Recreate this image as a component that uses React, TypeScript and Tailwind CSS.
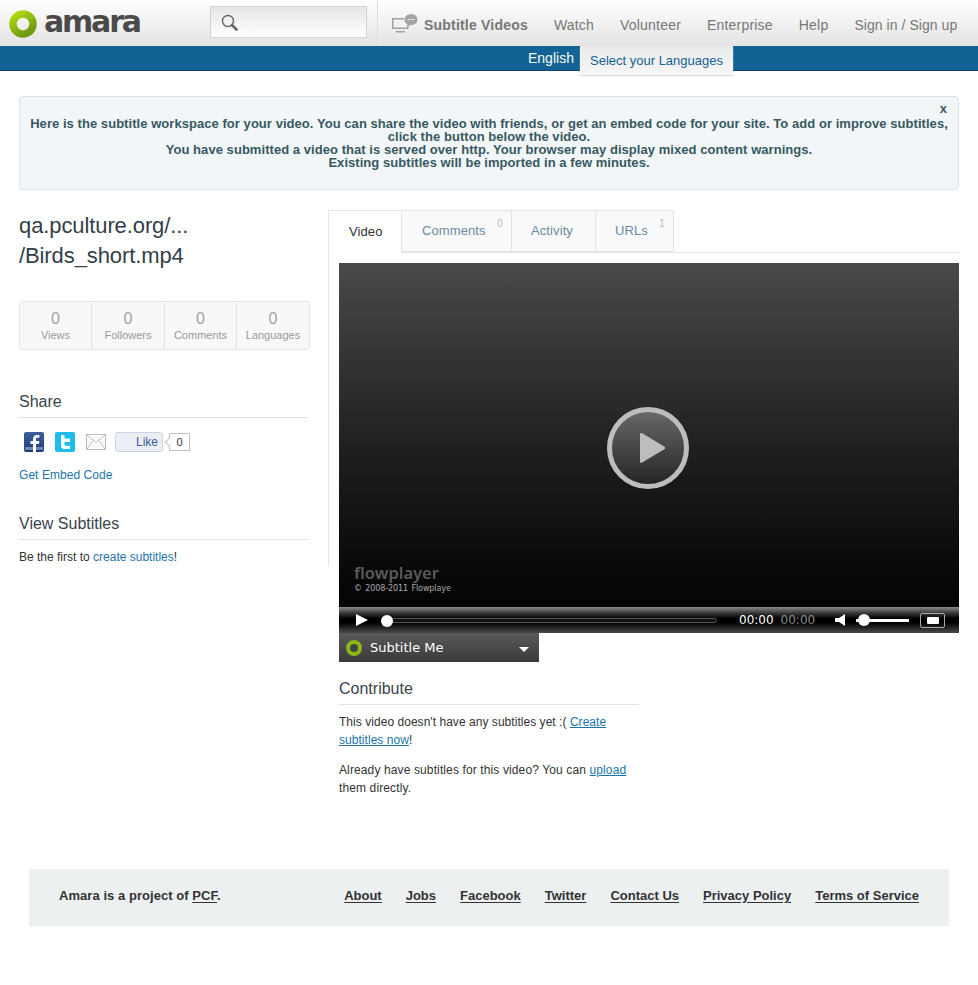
const sans = "font-['Liberation_Sans',Arial,sans-serif]"

function Logo() {
  return (
    <div className="flex items-center">
      <svg width="28" height="28" viewBox="0 0 28 28">
        <defs>
          <linearGradient id="ring" x1="0" y1="0" x2="0.6" y2="1">
            <stop offset="0" stopColor="#b2dc0c" />
            <stop offset="1" stopColor="#6f9a12" />
          </linearGradient>
        </defs>
        <circle cx="14" cy="14" r="10" fill="none" stroke="url(#ring)" strokeWidth="7.5" />
      </svg>
      <span className="ml-[7px] font-['DejaVu_Sans',sans-serif] text-[30px] font-bold leading-none tracking-[-2.2px] text-[#4a4a4a] -translate-y-[2px]">
        amara
      </span>
    </div>
  )
}

function Header() {
  return (
    <header className="flex h-[46px] bg-gradient-to-b from-white to-[#e3e3e3] pl-[9px]">
      <div className="w-[201px] pt-[9px]">
        <Logo />
      </div>
      <div className="mt-[6px] flex h-[32px] w-[157px] items-center border border-[#d4d4d4] bg-gradient-to-b from-[#e6e6e6] to-white pl-[10px]">
        <svg width="17" height="17" viewBox="0 0 17 17">
          <circle cx="7" cy="7" r="5.500" fill="none" stroke="#666" strokeWidth="1.400" />
          <path d="M11 11l4.500 4.500" stroke="#666" strokeWidth="2.600" strokeLinecap="round" />
        </svg>
      </div>
      <div className="ml-[10px] h-[44px] w-px bg-[#dcdcdc]" />
      <nav className="flex items-center pl-[13px] pt-[4px] text-[14px] tracking-[0.2px] text-[#777]">
        <svg width="27" height="20" viewBox="0 0 27 20" className="mr-[6px] -translate-y-[1px]">
          <path d="M1 4h12v1.500H2.500v8H16V11h1.500v4H1zM5 17h9v1.500H5z" fill="#a3a3a3" />
          <ellipse cx="20" cy="5.500" rx="6.500" ry="5.500" fill="#a3a3a3" />
          <path d="M16 9l1 4 3-3z" fill="#a3a3a3" />
          <circle cx="17.500" cy="5.500" r="0.800" fill="#fff" />
          <circle cx="20" cy="5.500" r="0.800" fill="#fff" />
          <circle cx="22.500" cy="5.500" r="0.800" fill="#fff" />
        </svg>
        <a className="mr-[26px] font-bold">Subtitle Videos</a>
        <a className="mr-[26px]">Watch</a>
        <a className="mr-[26px]">Volunteer</a>
        <a className="mr-[26px]">Enterprise</a>
        <a className="mr-[26px]">Help</a>
        <a className="tracking-[0.05px]">Sign in / Sign up</a>
      </nav>
    </header>
  )
}

function LanguageBar() {
  return (
    <div className="relative flex h-[25px] items-start border-b border-[#0c4365] bg-[#136296] pl-[528px]">
      <span className="pt-[3px] text-[14px] leading-[18px] text-[#f6fbe9]">English</span>
      <a className="absolute left-[580px] top-0 h-[29px] w-[153px] bg-gradient-to-b from-[#e9e9e9] to-[#f7f7f7] pl-[10px] pt-[6px] text-[13px] leading-[18px] text-[#136296] shadow-[0_1px_1px_#ddd]">
        Select your Languages
      </a>
    </div>
  )
}

function Notice() {
  return (
    <div className="mx-[19px] mt-[25px] h-[94px] rounded-[4px] border border-[#dde3e8] bg-[#f2f6f9] px-[5px] pt-[5px] text-center text-[13px] font-bold leading-[13px] tracking-[0.05px] text-[#37595f]">
      <div className="mb-[2px] pr-[6px] text-right leading-[13px]">x</div>
      <p>
        Here is the subtitle workspace for your video. You can share the video with friends, or get an embed code for your site. To add or improve subtitles, click the button below the video.
      </p>
      <p>You have submitted a video that is served over http. Your browser may display mixed content warnings.</p>
      <p>Existing subtitles will be imported in a few minutes.</p>
    </div>
  )
}

function Stat({ label, width, last }: { label: string; width: string; last?: boolean }) {
  return (
    <div className={`pt-[7px] text-center ${width} ${last ? 'flex-1' : 'border-r border-[#e4e4e4]'}`}>
      <div className="text-[16px] leading-[20px] text-[#a3a3a3]">0</div>
      <div className="-mt-[2px] text-[11px] leading-[16px] text-[#999]">{label}</div>
    </div>
  )
}

function Heading({ children }: { children: string }) {
  return <h3 className="border-b border-[#dfe3e7] pb-[5px] text-[16px] leading-[20px] text-[#3a444b]">{children}</h3>
}

function ShareIcons() {
  return (
    <div className="mt-[14px] flex items-center pl-[5px]">
      <svg width="20" height="20" viewBox="0 0 20 20">
        <defs>
          <linearGradient id="fb" x1="0" y1="0" x2="0" y2="1">
            <stop offset="0" stopColor="#3f5f9f" />
            <stop offset="1" stopColor="#1d3a78" />
          </linearGradient>
        </defs>
        <rect width="20" height="20" rx="2" fill="url(#fb)" />
        <rect x="1" y="15" width="18" height="3" fill="#6f86b5" />
        <path d="M12 20v-8h3l.4-3H12V7.200c0-.9.3-1.400 1.500-1.400h1.900V3.100c-.4 0-1.400-.1-2.500-.1C10.600 3 9 4.400 9 6.900V9H6.500v3H9v8z" fill="#fff" />
      </svg>
      <svg width="20" height="20" viewBox="0 0 20 20" className="ml-[11px]">
        <rect width="20" height="20" rx="2" fill="#1ebcec" />
        <path d="M6 3h3.500v3.500H15V10H9.500v2.200c0 1 .5 1.500 1.500 1.500h4V17h-5.500C7.300 17 6 15.600 6 13.500z" fill="#fff" />
      </svg>
      <svg width="20" height="16" viewBox="0 0 20 16" className="ml-[11px]">
        <rect x="0.500" y="0.500" width="19" height="15" fill="#fafafa" stroke="#bdbdbd" />
        <path d="M0.500 0.500l9.500 8 9.500-8M0.500 15.500l6.500-9M19.500 15.500l-6.500-9" fill="none" stroke="#bdbdbd" />
      </svg>
      <div className="ml-[9px] flex h-[20px] w-[48px] items-center justify-end rounded-[3px] border border-[#cad4e7] bg-[#eceef5] pr-[4px] text-[12px] text-[#3b5998]">
        Like
      </div>
      <div className="relative ml-[6px] flex h-[18px] w-[21px] items-center justify-center border border-[#c1c1c1] bg-white text-[11px] text-[#333]">
        <span className="absolute -left-[4px] top-[5px] size-[6px] rotate-45 border-b border-l border-[#c1c1c1] bg-white" />
        0
      </div>
    </div>
  )
}

function Sidebar() {
  return (
    <aside className="w-[309px] shrink-0">
      <h2 className="pt-[1px] text-[22px] leading-[30px] tracking-[-0.1px] text-[#333f48]">
        qa.pculture.org/...
        <br />
        /Birds_short.mp4
      </h2>
      <div className="mt-[30px] flex h-[49px] w-[291px] rounded-[4px] border border-[#e4e4e4] bg-[#f8f8f8]">
        <Stat label="Views" width="w-[72px]" />
        <Stat label="Followers" width="w-[73px]" />
        <Stat label="Comments" width="w-[72px]" />
        <Stat label="Languages" width="w-[72px]" last />
      </div>
      <div className="mt-[42px] w-[289px]">
        <Heading>Share</Heading>
        <ShareIcons />
        <a className="mt-[14px] block text-[12px] leading-[18px] tracking-[0.05px] text-[#1b75a8]">Get Embed Code</a>
      </div>
      <div className="mt-[30px] w-[289px]">
        <Heading>View Subtitles</Heading>
        <p className="mt-[8px] text-[12px] leading-[18px] text-[#333]">
          Be the first to <a className="text-[#1b75a8]">create subtitles</a>!
        </p>
      </div>
    </aside>
  )
}

function Tab({ label, count, width, inset, active }: { label: string; count?: number; width: string; inset: string; active?: boolean }) {
  return (
    <div
      className={`relative flex items-center border-r border-t border-[#e1e5e8] text-[13px] tracking-[0.1px] ${width} ${inset} ${
        active ? '-mb-px h-[43px] bg-white text-[#333]' : 'h-[42px] border-b bg-[#f9f9f9] text-[#6a8ba3]'
      }`}
    >
      {label}
      {count !== undefined && <span className="absolute right-[8px] top-[5px] text-[10px] text-[#b5bcc2]">{count}</span>}
    </div>
  )
}

function Player() {
  return (
    <div className="mt-[10px]">
      <div className="relative h-[344px] w-[620px] overflow-hidden bg-gradient-to-b from-[#4a4a4a] via-[#1f1f1f] via-55% to-[#040404]">
        <svg width="82" height="82" viewBox="0 0 82 82" className="absolute left-[268px] top-[144px]">
          <defs>
            <linearGradient id="disc" x1="0" y1="0" x2="0" y2="1">
              <stop offset="0" stopColor="#6a6a6a" />
              <stop offset="1" stopColor="#232323" />
            </linearGradient>
          </defs>
          <circle cx="41" cy="41" r="38.500" fill="url(#disc)" stroke="#bdbdbd" strokeWidth="5" />
          <path d="M33 27.500c0-1.500 1-2 2.200-1.300l22 13.300c1.200.8 1.200 2 0 2.800l-22 13.300c-1.200.7-2.200.2-2.200-1.300z" fill="#bdbdbd" />
        </svg>
        <div className="absolute left-[15px] top-[299px] whitespace-nowrap">
          <div className="font-['Noto_Sans',sans-serif] text-[16.5px] font-semibold leading-[21px] text-[#5a5a5a]">flowplayer</div>
          <div className="font-['DejaVu_Sans',sans-serif] text-[8px] leading-[11px] tracking-[-0.1px] text-[#aaa] [word-spacing:1px]">© 2008-2011 Flowplaye</div>
        </div>
      </div>
      <div className="flex h-[26px] w-[620px] items-center bg-[linear-gradient(#8a8a8a,#333_25%,#000_45%,#000_60%,#4a4a4a)] font-['DejaVu_Sans',sans-serif]">
        <svg width="12" height="12" viewBox="0 0 12 12" className="ml-[17px]">
          <path d="M0 0l12 6-12 6z" fill="#fff" />
        </svg>
        <div className="relative ml-[13px] h-[5px] w-[336px] rounded-full border border-[#555] bg-[#111]">
          <span className="absolute -left-[1px] -top-[4px] size-[12px] rounded-full bg-white" />
        </div>
        <span className="ml-[22px] text-[12px] text-white">00:00</span>
        <span className="ml-[7px] text-[12px] text-[#8a8a8a]">00:00</span>
        <svg width="11" height="12" viewBox="0 0 11 12" className="ml-[20px]">
          <path d="M0 4h4l6-4v12l-6-4H0z" fill="#fff" />
        </svg>
        <div className="relative ml-[10px] h-[3px] w-[53px] bg-white">
          <span className="absolute left-[2px] -top-[5px] size-[12px] rounded-full bg-white" />
        </div>
        <div className="ml-[11px] flex h-[15px] w-[25px] items-center justify-center rounded-[2px] border border-[#aaa]">
          <span className="h-[7px] w-[12px] rounded-[1px] bg-white" />
        </div>
      </div>
      <div className="flex h-[29px] w-[200px] items-center bg-gradient-to-b from-[#5a5a5a] to-[#3a3a3a] pl-[7px] pr-[10px] font-['DejaVu_Sans',sans-serif] text-[13px] text-white">
        <span className="size-[16px] rounded-full border-[4px] border-[#8fb516] bg-[#444]" />
        <span className="ml-[8px]">Subtitle Me</span>
        <span className="ml-auto mt-[3px] border-x-[5px] border-t-[5px] border-x-transparent border-t-white" />
      </div>
    </div>
  )
}

function Content() {
  return (
    <div className="relative ml-[19px] mt-[20px] flex w-[941px]">
      <Sidebar />
      <div className="w-[632px]">
        <div className="absolute left-[309px] top-0 z-10 h-[356px] w-px bg-[#e1e5e8]" />
        <div className="flex border-b border-[#e1e5e8]">
          <Tab label="Video" width="w-[74px]" inset="pl-[21px]" active />
          <Tab label="Comments" count={0} width="w-[110px]" inset="pl-[20px]" />
          <Tab label="Activity" width="w-[84px]" inset="pl-[19px]" />
          <Tab label="URLs" count={1} width="w-[78px]" inset="pl-[19px]" />
        </div>
        <div className="pl-[11px]">
          <Player />
          <div className="mt-[17px] w-[300px]">
            <Heading>Contribute</Heading>
            <p className="mt-[8px] text-[12px] leading-[18px] tracking-[0.04px] text-[#333]">
              This video doesn't have any subtitles yet :( <a className="text-[#1b75a8] underline">Create subtitles now</a>!
            </p>
            <p className="mt-[12px] text-[12px] leading-[18px] tracking-[0.12px] text-[#333]">
              Already have subtitles for this video? You can <a className="text-[#1b75a8] underline">upload</a> them directly.
            </p>
          </div>
        </div>
      </div>
    </div>
  )
}

function Footer() {
  const links = ['About', 'Jobs', 'Facebook', 'Twitter', 'Contact Us', 'Privacy Policy', 'Terms of Service']
  return (
    <footer className="mx-[29px] mt-[72px] flex h-[57px] items-center justify-between bg-[#ecf0f1] px-[30px] pb-[4px] text-[13px] font-bold text-[#333]">
      <div className="tracking-[0.05px]">
        Amara is a project of <a className="underline underline-offset-2">PCF</a>.
      </div>
      <div className="flex gap-[24px]">
        {links.map((l) => (
          <a key={l} className="underline underline-offset-2">
            {l}
          </a>
        ))}
      </div>
    </footer>
  )
}

export default function App() {
  return (
    <div className={`${sans} min-h-[985px] bg-white`}>
      <Header />
      <LanguageBar />
      <Notice />
      <Content />
      <Footer />
    </div>
  )
}
